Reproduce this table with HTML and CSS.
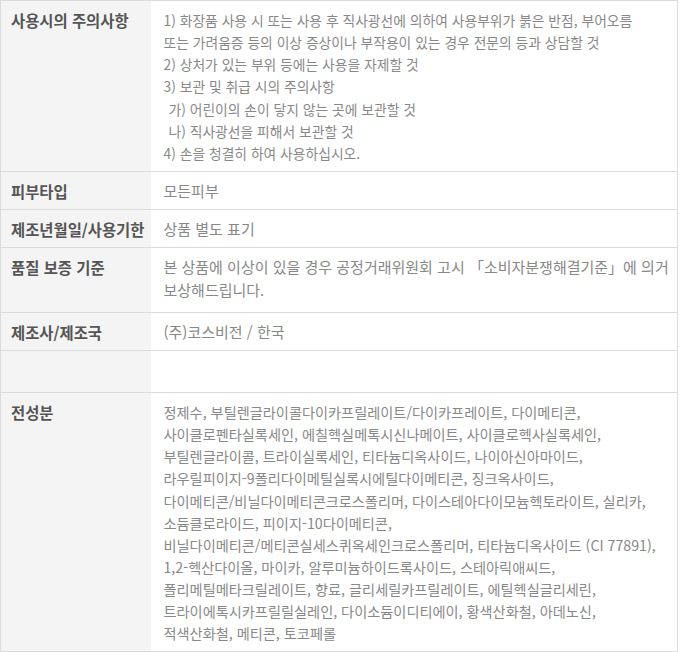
FILE: index.html
```html
<!DOCTYPE html>
<html lang="ko">
<head>
  <meta charset="UTF-8">
  <meta name="viewport" content="width=device-width, initial-scale=1.0">
  <title>상품 정보 고시</title>
  <link rel="stylesheet" href="styles.css">
</head>
<body>

  <!-- Product notice table -->
  <table class="notice">
    <tbody>
      <tr class="caution">
        <th>사용시의 주의사항</th>
        <td>
          1) 화장품 사용 시 또는 사용 후 직사광선에 의하여 사용부위가 붉은 반점, 부어오름<br>
          또는 가려움증 등의 이상 증상이나 부작용이 있는 경우 전문의 등과 상담할 것<br>
          2) 상처가 있는 부위 등에는 사용을 자제할 것<br>
          3) 보관 및 취급 시의 주의사항<br>
          <span class="sub">가) 어린이의 손이 닿지 않는 곳에 보관할 것</span><br>
          <span class="sub">나) 직사광선을 피해서 보관할 것</span><br>
          4) 손을 청결히 하여 사용하십시오.
        </td>
      </tr>
      <tr>
        <th>피부타입</th>
        <td>모든피부</td>
      </tr>
      <tr>
        <th>제조년월일/사용기한</th>
        <td>상품 별도 표기</td>
      </tr>
      <tr class="tall">
        <th>품질 보증 기준</th>
        <td>
          본 상품에 이상이 있을 경우 공정거래위원회 고시 「소비자분쟁해결기준」에 의거<br>
          보상해드립니다.
        </td>
      </tr>
      <tr>
        <th>제조사/제조국</th>
        <td>(주)코스비전 / 한국</td>
      </tr>
      <tr class="empty">
        <th></th>
        <td></td>
      </tr>
      <tr class="last">
        <th>전성분</th>
        <td>
          정제수, 부틸렌글라이콜다이카프릴레이트/다이카프레이트, 다이메티콘,<br>
          사이클로펜타실록세인, 에칠헥실메톡시신나메이트, 사이클로헥사실록세인,<br>
          부틸렌글라이콜, 트라이실록세인, 티타늄디옥사이드, 나이아신아마이드,<br>
          라우릴피이지-9폴리다이메틸실록시에틸다이메티콘, 징크옥사이드,<br>
          다이메티콘/비닐다이메티콘크로스폴리머, 다이스테아다이모늄헥토라이트, 실리카,<br>
          소듐클로라이드, 피이지-10다이메티콘,<br>
          비닐다이메티콘/메티콘실세스퀴옥세인크로스폴리머, 티타늄디옥사이드 (CI 77891),<br>
          1,2-헥산다이올, 마이카, 알루미늄하이드록사이드, 스테아릭애씨드,<br>
          폴리메틸메타크릴레이트, 향료, 글리세릴카프릴레이트, 에틸헥실글리세린,<br>
          트라이에톡시카프릴릴실레인, 다이소듐이디티에이, 황색산화철, 아데노신,<br>
          적색산화철, 메티콘, 토코페롤
        </td>
      </tr>
    </tbody>
  </table>

</body>
</html>
```

FILE: styles.css
```css
/* Global Styles */
* {
  margin: 0;
  padding: 0;
  box-sizing: border-box;
}

body {
  font-family: "Noto Sans CJK KR", "Noto Sans", sans-serif;
  background: #fff;
}

/* Notice Table */
.notice {
  width: 678px;
  border-collapse: collapse;
  border: 1px solid #dcdcdc;
}

.notice tr {
  border-bottom: 1px solid #dcdcdc;
}

.notice th,
.notice td {
  vertical-align: top;
  text-align: left;
  line-height: 22.15px;
  padding: 8px 0 7px;
}

.notice th {
  width: 150px;
  padding-left: 10px;
  background-color: #f4f4f4;
  color: #555;
  font-size: 15.4px;
  font-weight: 700;
  white-space: nowrap;
}

.notice td {
  padding-left: 13px;
  color: #888;
  font-size: 15px;
}

.notice .caution td {
  font-size: 13.8px;
}

.notice .sub {
  padding-left: 5px;
}

.notice .tall td,
.notice .tall th {
  padding-bottom: 11px;
}

.notice .empty th,
.notice .empty td {
  height: 42px;
}

.notice .last th,
.notice .last td {
  padding-bottom: 6px;
}

.notice .last td {
  font-size: 14.2px;
}
```
